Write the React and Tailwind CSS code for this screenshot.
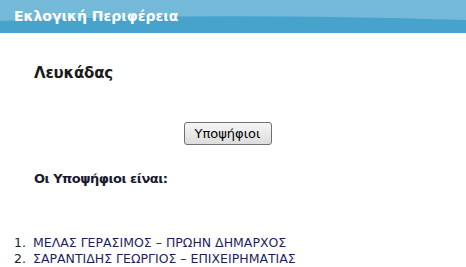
import React from 'react';

const candidates = [
    'ΜΕΛΑΣ ΓΕΡΑΣΙΜΟΣ – ΠΡΩΗΝ ΔΗΜΑΡΧΟΣ',
    'ΣΑΡΑΝΤΙΔΗΣ ΓΕΩΡΓΙΟΣ – ΕΠΙΧΕΙΡΗΜΑΤΙΑΣ',
];

const HeaderWave = () => (
    <svg className="absolute inset-0 w-full h-full" viewBox="0 0 466 33" preserveAspectRatio="none">
        <rect x="0" y="0" width="466" height="33" fill="#75b9d9" />
        <path d="M0 21 Q 200 12 466 20 L466 33 L0 33 Z" fill="#48a3cc" />
    </svg>
);

const App = () => {
    return (
        <div className="w-[466px] h-[267px] bg-white overflow-hidden font-['DejaVu_Sans',sans-serif]">
            <div className="relative h-[33px]">
                <HeaderWave />
                <h1 className="relative pl-[14px] pt-[8px] text-[14px] leading-[17px] font-bold text-white">
                    Εκλογική Περιφέρεια
                </h1>
            </div>
            <div className="px-[34px] pt-[31px]">
                <h2 className="text-[15px] leading-[18px] font-bold tracking-[-0.2px] text-[#1a1a1a]">Λευκάδας</h2>
            </div>
            <div className="flex justify-center pt-[40px] pr-[11px]">
                <button className="w-[88px] h-[23px] rounded-[3px] border border-[#707070] bg-gradient-to-b from-[#f6f6f6] to-[#dcdcdc] text-[13px] text-black">
                    Υποψήφιοι
                </button>
            </div>
            <div className="px-[34px] pt-[26px]">
                <h3 className="text-[13px] leading-[16px] font-bold tracking-[-0.5px] text-[#1a1a2e]">Οι Υποψήφιοι είναι:</h3>
            </div>
            <ol className="pl-[14px] pt-[48px] text-[12.5px] leading-[16px]">
                {candidates.map((c, i) => (
                    <li key={c} className="flex">
                        <span className="w-[19px] text-[#222]">{i + 1}.</span>
                        <span className="text-[#1e1e5a]">{c}</span>
                    </li>
                ))}
            </ol>
        </div>
    );
};

export default App;
